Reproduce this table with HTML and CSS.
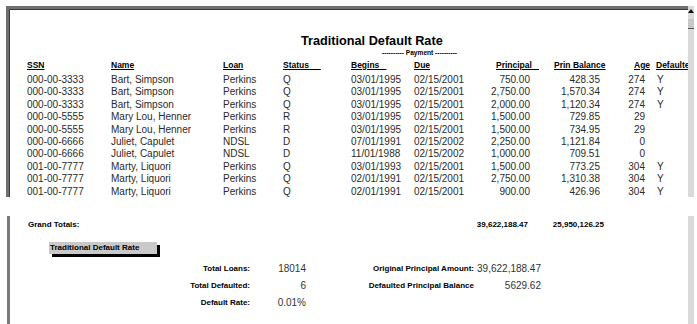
FILE: index.html
```html
<!DOCTYPE html>
<html>
<head>
<meta charset="utf-8">
<link rel="stylesheet" href="styles.css">
</head>
<body>
<div class="sec sec1">
  <div class="frame frame1">
    <div class="title">Traditional Default Rate</div>
    <div class="payment">---------- Payment ----------</div>
    <div class="row head">
      <span class="c1"><u>SSN</u></span>
      <span class="c2"><u>Name</u></span>
      <span class="c3"><u>Loan</u></span>
      <span class="c4"><u>Status&nbsp;&nbsp;&nbsp;&nbsp;&nbsp;</u></span>
      <span class="c5"><u>Begins&nbsp;&nbsp;&nbsp;</u></span>
      <span class="c6"><u>Due</u></span>
      <span class="c7 hl"><u>Principal&nbsp;&nbsp;&nbsp;</u></span>
      <span class="c8 hl"><u>Prin Balance</u></span>
      <span class="c9 hl"><u>Age</u></span>
      <span class="c10"><u>Defaulted</u></span>
    </div>
    <div class="row"><span class="c1">000-00-3333</span><span class="c2">Bart, Simpson</span><span class="c3">Perkins</span><span class="c4">Q</span><span class="c5">03/01/1995</span><span class="c6">02/15/2001</span><span class="c7">750.00</span><span class="c8">428.35</span><span class="c9">274</span><span class="c10">Y</span></div>
    <div class="row"><span class="c1">000-00-3333</span><span class="c2">Bart, Simpson</span><span class="c3">Perkins</span><span class="c4">Q</span><span class="c5">03/01/1995</span><span class="c6">02/15/2001</span><span class="c7">2,750.00</span><span class="c8">1,570.34</span><span class="c9">274</span><span class="c10">Y</span></div>
    <div class="row"><span class="c1">000-00-3333</span><span class="c2">Bart, Simpson</span><span class="c3">Perkins</span><span class="c4">Q</span><span class="c5">03/01/1995</span><span class="c6">02/15/2001</span><span class="c7">2,000.00</span><span class="c8">1,120.34</span><span class="c9">274</span><span class="c10">Y</span></div>
    <div class="row"><span class="c1">000-00-5555</span><span class="c2">Mary Lou, Henner</span><span class="c3">Perkins</span><span class="c4">R</span><span class="c5">03/01/1995</span><span class="c6">02/15/2001</span><span class="c7">1,500.00</span><span class="c8">729.85</span><span class="c9">29</span><span class="c10"></span></div>
    <div class="row"><span class="c1">000-00-5555</span><span class="c2">Mary Lou, Henner</span><span class="c3">Perkins</span><span class="c4">R</span><span class="c5">03/01/1995</span><span class="c6">02/15/2001</span><span class="c7">1,500.00</span><span class="c8">734.95</span><span class="c9">29</span><span class="c10"></span></div>
    <div class="row"><span class="c1">000-00-6666</span><span class="c2">Juliet, Capulet</span><span class="c3">NDSL</span><span class="c4">D</span><span class="c5">07/01/1991</span><span class="c6">02/15/2002</span><span class="c7">2,250.00</span><span class="c8">1,121.84</span><span class="c9">0</span><span class="c10"></span></div>
    <div class="row"><span class="c1">000-00-6666</span><span class="c2">Juliet, Capulet</span><span class="c3">NDSL</span><span class="c4">D</span><span class="c5">11/01/1988</span><span class="c6">02/15/2002</span><span class="c7">1,000.00</span><span class="c8">709.51</span><span class="c9">0</span><span class="c10"></span></div>
    <div class="row"><span class="c1">001-00-7777</span><span class="c2">Marty, Liquori</span><span class="c3">Perkins</span><span class="c4">Q</span><span class="c5">03/01/1993</span><span class="c6">02/15/2001</span><span class="c7">1,500.00</span><span class="c8">773.25</span><span class="c9">304</span><span class="c10">Y</span></div>
    <div class="row"><span class="c1">001-00-7777</span><span class="c2">Marty, Liquori</span><span class="c3">Perkins</span><span class="c4">Q</span><span class="c5">02/01/1991</span><span class="c6">02/15/2001</span><span class="c7">2,750.00</span><span class="c8">1,310.38</span><span class="c9">304</span><span class="c10">Y</span></div>
    <div class="row"><span class="c1">001-00-7777</span><span class="c2">Marty, Liquori</span><span class="c3">Perkins</span><span class="c4">Q</span><span class="c5">02/01/1991</span><span class="c6">02/15/2001</span><span class="c7">900.00</span><span class="c8">426.96</span><span class="c9">304</span><span class="c10">Y</span></div>
  </div>
  <div class="vscroll">
    <div class="arrow"></div>
    <div class="thumb"></div>
  </div>
</div>
<div class="sec sec2">
  <div class="frame frame2">
    <div class="row totals">
      <span class="gt">Grand Totals:</span>
      <span class="t1">39,622,188.47</span>
      <span class="t2">25,950,126.25</span>
    </div>
    <div class="btnwrap"><div class="btn">Traditional Default Rate</div></div>
    <div class="stats">
      <div class="stat">
        <span class="lbl">Total Loans:</span><span class="val">18014</span>
        <span class="lbl">Total Defaulted:</span><span class="val">6</span>
        <span class="lbl">Default Rate:</span><span class="val">0.01%</span>
      </div>
      <div class="stat stat2">
        <span class="lbl">Original Principal Amount:</span><span class="val">39,622,188.47</span>
        <span class="lbl">Defaulted Principal Balance</span><span class="val">5629.62</span>
      </div>
    </div>
  </div>
  <div class="vscroll"></div>
</div>
</body>
</html>
```
FILE: styles.css
```css
html, body {
  margin: 0;
  padding: 0;
  background: #ffffff;
}
body {
  width: 697px;
  height: 324px;
  overflow: hidden;
  font-family: "Liberation Sans", Arial, sans-serif;
  color: #2a2a2a;
}
.sec {
  display: flex;
}
.sec1 {
  margin-top: 6px;
  margin-left: 6px;
  height: 191px;
}
.sec2 {
  margin-top: 19px;
  margin-left: 7px;
  height: 108px;
}
.frame {
  flex: 1;
  overflow: hidden;
  background: #fff;
}
.frame1 {
  border-top: 3px solid #707070;
  border-left: 3px solid #707070;
  box-shadow: inset 1px 1px 0 #3a3a3a;
}
.frame2 {
  border-left: 3px solid #7a7a7a;
}
.vscroll {
  width: 6px;
  margin-right: 3px;
  background: #dadada;
  display: flex;
  flex-direction: column;
  align-items: center;
}
.arrow {
  margin-top: 3px;
  width: 0;
  height: 0;
  border-left: 3px solid transparent;
  border-right: 3px solid transparent;
  border-bottom: 4px solid #111;
}
.thumb {
  margin-top: 6px;
  width: 6px;
  height: 9px;
  background: #c8c8c8;
  border-bottom: 1px solid #555;
}
.title {
  margin-top: 25px;
  padding-left: 292px;
  font-weight: bold;
  font-size: 12.7px;
  line-height: 14px;
  color: #000;
  white-space: nowrap;
}
.payment {
  margin-left: 373px;
  font-weight: bold;
  font-size: 6.6px;
  line-height: 9px;
  color: #000;
  white-space: nowrap;
}
.row {
  display: flex;
  height: 12.4px;
  line-height: 12.4px;
  font-size: 10px;
  padding-left: 18px;
  white-space: nowrap;
}
.row span {
  display: block;
  flex: none;
}
.head {
  font-weight: bold;
  font-size: 8.5px;
  color: #000;
  height: 14px;
  line-height: 14px;
  margin-top: 1px;
  margin-bottom: 2px;
}
.c1 { width: 84px; }
.c2 { width: 112px; }
.c3 { width: 60px; }
.c4 { width: 68px; }
.c5 { width: 63px; }
.c6 { width: 64px; }
.c7 { width: 52px; text-align: right; }
.c8 { width: 70px; text-align: right; }
.c9 { width: 45px; text-align: right; }
.c10 { padding-left: 12px; }
.head .hl { text-align: left; }
.head .c7 { padding-left: 18px; width: 34px; }
.head .c8 { padding-left: 24px; width: 46px; }
.head .c9 { padding-left: 34px; width: 11px; }
.head .c10 { padding-left: 11px; }
.totals {
  margin-top: 3px;
  font-weight: bold;
  font-size: 8px;
  color: #000;
}
.totals .gt { width: 448px; }
.totals .t1 { width: 52px; text-align: right; }
.totals .t2 { width: 76px; text-align: right; }
.btnwrap {
  margin-top: 5px;
  padding-left: 39px;
}
.btn {
  display: inline-block;
  width: 107px;
  height: 12px;
  line-height: 12px;
  background: #c9c9c9;
  font-weight: bold;
  font-size: 8px;
  color: #000;
  padding-left: 1px;
  box-shadow: 3px 3px 0 #000;
}
.stats {
  display: flex;
  margin-top: 6px;
}
.stat {
  display: grid;
  grid-template-columns: 240px 56px;
  grid-auto-rows: 17px;
  align-items: center;
}
.stat2 {
  grid-template-columns: 168px 67px;
}
.lbl {
  text-align: right;
  font-weight: bold;
  font-size: 8px;
  color: #000;
}
.val {
  text-align: right;
  font-size: 10px;
  color: #333;
}
```
